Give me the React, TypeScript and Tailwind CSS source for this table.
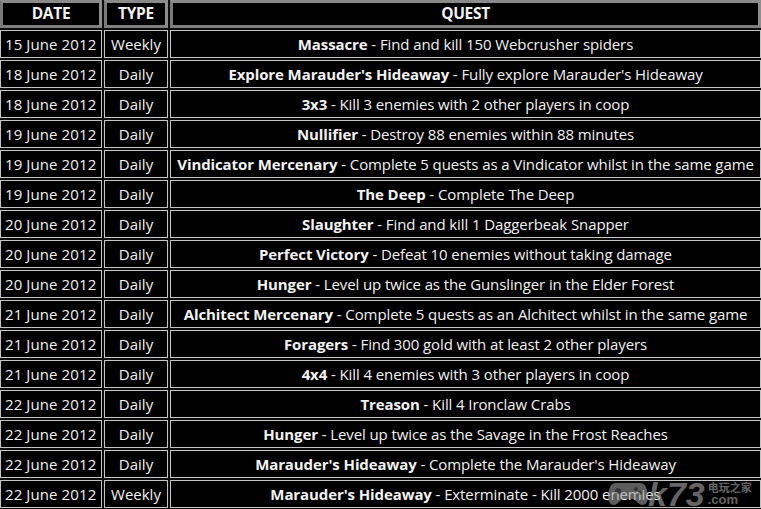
import React from 'react';

type Quest = {
  date: string;
  type: string;
  name: string;
  desc: string;
};

const quests: Quest[] = [
  { date: '15 June 2012', type: 'Weekly', name: 'Massacre', desc: 'Find and kill 150 Webcrusher spiders' },
  { date: '18 June 2012', type: 'Daily', name: "Explore Marauder's Hideaway", desc: "Fully explore Marauder's Hideaway" },
  { date: '18 June 2012', type: 'Daily', name: '3x3', desc: 'Kill 3 enemies with 2 other players in coop' },
  { date: '19 June 2012', type: 'Daily', name: 'Nullifier', desc: 'Destroy 88 enemies within 88 minutes' },
  { date: '19 June 2012', type: 'Daily', name: 'Vindicator Mercenary', desc: 'Complete 5 quests as a Vindicator whilst in the same game' },
  { date: '19 June 2012', type: 'Daily', name: 'The Deep', desc: 'Complete The Deep' },
  { date: '20 June 2012', type: 'Daily', name: 'Slaughter', desc: 'Find and kill 1 Daggerbeak Snapper' },
  { date: '20 June 2012', type: 'Daily', name: 'Perfect Victory', desc: 'Defeat 10 enemies without taking damage' },
  { date: '20 June 2012', type: 'Daily', name: 'Hunger', desc: 'Level up twice as the Gunslinger in the Elder Forest' },
  { date: '21 June 2012', type: 'Daily', name: 'Alchitect Mercenary', desc: 'Complete 5 quests as an Alchitect whilst in the same game' },
  { date: '21 June 2012', type: 'Daily', name: 'Foragers', desc: 'Find 300 gold with at least 2 other players' },
  { date: '21 June 2012', type: 'Daily', name: '4x4', desc: 'Kill 4 enemies with 3 other players in coop' },
  { date: '22 June 2012', type: 'Daily', name: 'Treason', desc: 'Kill 4 Ironclaw Crabs' },
  { date: '22 June 2012', type: 'Daily', name: 'Hunger', desc: 'Level up twice as the Savage in the Frost Reaches' },
  { date: '22 June 2012', type: 'Daily', name: "Marauder's Hideaway", desc: "Complete the Marauder's Hideaway" },
  { date: '22 June 2012', type: 'Weekly', name: "Marauder's Hideaway", desc: 'Exterminate - Kill 2000 enemies' },
];

const headCell =
  'h-[28px] flex items-center justify-center bg-black border-[3px] border-t-[#8a8a8a] border-l-[#7a7a7a] border-r-[#8e8e8e] border-b-[#7e7e7e] font-bold text-[15.5px] tracking-[-0.3px]';
const bodyCell = 'h-[28px] flex items-center bg-black border border-[#c4c4c4] whitespace-nowrap';

export default function App() {
  return (
    <div
      className="relative w-[761px] h-[509px] overflow-hidden bg-[#0c0c0c] text-[#f2f2f2] text-[15px]"
      style={{ fontFamily: '"Open Sans", "Liberation Sans", sans-serif' }}
    >
      <div className="grid grid-cols-[102px_64px_591px] gap-x-[2px] gap-y-[2px]">
        <div className={headCell}>DATE</div>
        <div className={headCell}>TYPE</div>
        <div className={headCell}>QUEST</div>

        {quests.map((q, i) => (
          <React.Fragment key={i}>
            <div className={`${bodyCell} pl-[4px] tracking-[0.1px]`}>{q.date}</div>
            <div className={`${bodyCell} justify-center`}>{q.type}</div>
            <div className={`${bodyCell} justify-center tracking-[-0.1px]`}>
              <span className="font-bold">{q.name}</span>
              <span>&nbsp;- {q.desc}</span>
            </div>
          </React.Fragment>
        ))}
      </div>

      {/* watermark */}
      <div className="absolute left-[606px] top-[477px] flex items-center opacity-60 pointer-events-none">
        <svg width="44" height="30" viewBox="0 0 44 30">
          <path
            d="M10 4 C4 4 2 12 2 18 C2 26 8 28 12 24 L16 20 L28 20 L32 24 C36 28 42 26 42 18 C42 12 40 4 34 4 Z"
            fill="#9a9a9a"
          />
          <circle cx="12" cy="12" r="3" fill="#5a5a5a" />
          <circle cx="30" cy="10" r="2" fill="#5a5a5a" />
          <circle cx="34" cy="14" r="2" fill="#5a5a5a" />
        </svg>
        <span
          className="text-[34px] font-bold italic text-[#a8a8a8] leading-none -ml-[2px]"
          style={{ fontFamily: '"Liberation Sans", sans-serif' }}
        >
          k73
        </span>
        <div className="flex flex-col leading-none ml-[3px] text-[#a8a8a8]">
          <span className="text-[11px] font-bold" style={{ fontFamily: '"Noto Sans CJK SC", sans-serif' }}>
            电玩之家
          </span>
          <span className="text-[13px] font-bold" style={{ fontFamily: '"Liberation Sans", sans-serif' }}>
            .com
          </span>
        </div>
      </div>
    </div>
  );
}
